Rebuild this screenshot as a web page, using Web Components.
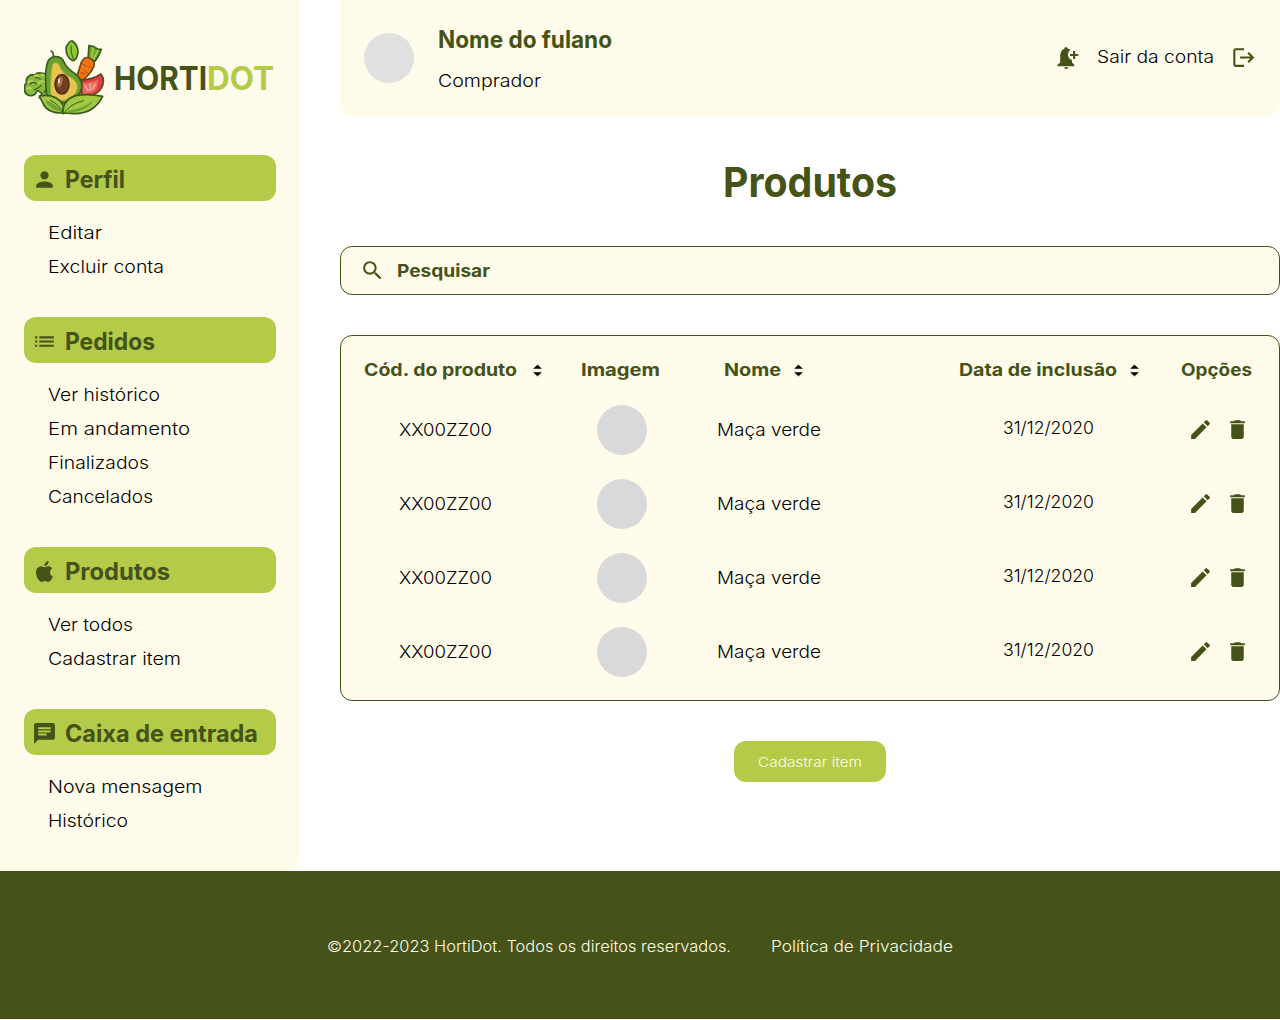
<!DOCTYPE html>
<html lang="pt-BR">
<head>
<meta charset="utf-8">
<title>HortiDot - Produtos</title>
<style>
:root{--cream:#fffbeb;--lime:#b4ca49;--moss:#455218}
body{margin:0;background:#fff;color:#000;font:350 17.4px/22px Inter,"Liberation Sans",sans-serif;overflow:hidden}
</style>
</head>
<body>
<horti-page></horti-page>
<script>
const define=(name,html,after)=>customElements.define(name,class extends HTMLElement{
  connectedCallback(){
    if(this.shadowRoot)return;
    this.attachShadow({mode:'open'}).innerHTML=typeof html==='function'?html(this):html;
    if(after)after(this);
  }
});

/* Text whose glyphs are widened to the given advance width */
define('horti-text',`<style>:host{display:block;white-space:pre;flex:none;text-align:left}span{display:inline-block;transform-origin:0 50%;vertical-align:top}</style><span><slot></slot></span>`,el=>{
  const w=+el.getAttribute('w'),s=el.shadowRoot.querySelector('span');
  const n=s.getBoundingClientRect().width;
  if(w&&n){s.style.transform=`scaleX(${w/n})`;el.style.width=w+'px';}
});

const ICONS={
  person:'<path d="M12 12c2.2 0 4-1.8 4-4s-1.800-4-4-4-4 1.800-4 4 1.800 4 4 4zm0 2c-2.700 0-8 1.300-8 4v2h16v-2c0-2.700-5.300-4-8-4z"/>',
  list:'<path d="M3 13h2v-2H3v2zm0 4h2v-2H3v2zm0-8h2V7H3v2zm4 4h14v-2H7v2zm0 4h14v-2H7v2zM7 7v2h14V7H7z"/>',
  apple:'<path d="M18.700 19.500c-.8 1.200-1.700 2.500-3 2.500s-1.800-.8-3.300-.8-2 .8-3.300.8c-1.300 0-2.300-1.300-3.100-2.500C4.200 17 3 12.500 4.700 9.400c.9-1.500 2.400-2.500 4-2.500 1.300 0 2.500.9 3.300.9s2.300-1.100 3.800-.9c.6 0 2.500.3 3.600 2-.1.100-2.100 1.300-2.100 3.800 0 3 2.600 4 2.700 4-.1.100-.4 1.400-1.300 2.800M13 3.500C13.700 2.700 14.900 2 15.900 2c.1 1.200-.3 2.400-1 3.200-.7.900-1.800 1.500-2.900 1.400-.2-1.100.4-2.300 1-3.100z"/>',
  message:'<path d="M20 2H4c-1.100 0-2 .9-2 2v18l4-4h14c1.100 0 2-.9 2-2V4c0-1.100-.9-2-2-2zM6 9h12v2H6V9zm8 5H6v-2h8v2zm4-6H6V6h12v2z"/>',
  search:'<path d="M15.5 14h-.79l-.28-.27A6.471 6.471 0 0 0 16 9.5 6.500 6.500 0 1 0 9.500 16c1.610 0 3.090-.59 4.230-1.570l.27.28v.79l5 4.990L20.490 19l-4.990-5zm-6 0C7.010 14 5 11.990 5 9.500S7.010 5 9.500 5 14 7.010 14 9.500 11.990 14 9.500 14z"/>',
  edit:'<path d="M3 17.250V21h3.750L17.810 9.940l-3.750-3.750L3 17.250zM20.710 7.040a1 1 0 0 0 0-1.410l-2.340-2.340a1 1 0 0 0-1.410 0l-1.830 1.830 3.750 3.750 1.830-1.830z"/>',
  trash:'<path d="M6 19c0 1.100.9 2 2 2h8c1.100 0 2-.9 2-2V7H6v12zM19 4h-3.500l-1-1h-5l-1 1H5v2h14V4z"/>',
  bell:'<path transform="translate(0 1)" d="M8.700 20.300h4.200a2.100 1.700 0 0 1-4.200 0zM10.500 1c.9 0 1.500.7 1.500 1.400 1.100.3 2 .7 2.700 1.400A5.500 5.500 0 0 0 16.300 13.500v2.300l2.200 2.200v1.500h-16V18L5 15.800v-6C5 6.300 6.600 3.300 9 2.500 9 1.700 9.600 1 10.500 1zM17.300 4.800h2.100v2.800H22.300v2h-2.900v2.900h-2.100v-2.900h-2.900v-2h2.900z"/>',
  exit:'<path fill="none" stroke="currentColor" stroke-width="2" d="M12.500 4H4.500Q3.200 4 3.200 5.300v13.400Q3.200 20 4.500 20h8M8.700 12h12.200M16.500 7.500 21 12l-4.500 4.500"/>',
  sort:'<path fill="#000" d="M12 6.700 15.700 10.100H8.300zM12 17.300 15.700 13.900H8.300z" stroke="#000" stroke-width=".5" stroke-linejoin="round"/>'
};
define('horti-icon',el=>`<style>:host{display:block;width:25px;height:25px;flex:none;color:var(--moss)}svg{display:block;width:100%;height:100%;fill:currentColor}</style><svg viewBox="0 0 24 24">${ICONS[el.getAttribute('name')]}</svg>`);

define('horti-logo',`<style>
:host{display:flex;align-items:center;height:75.400px;font-size:32px;font-weight:650;line-height:40px;color:var(--moss)}
svg{width:82px;height:76px;flex:none;margin-right:8px}.dot{color:var(--lime)}
horti-text{padding-top:2px}
</style>
<svg viewBox="12 12 246 228" stroke="#385a1b" stroke-width="5" stroke-linejoin="round" stroke-linecap="round">
<path d="M84 188 58 186 66 172 52 163 45 175Q31 183 22 176 12 170 14 158 11 147 20 141 16 128 27 120 36 114 44 117 54 107 66 112 77 110 86 124Z" fill="#8aba3c"/>
<path d="M24 139Q30 132 38 137M44 119Q50 116 56 123M22 157Q29 154 34 158M64 116Q70 115 76 122M56 142Q63 132 76 138" fill="none" stroke="#b3d354" stroke-width="6"/>
<path d="M30 145Q38 134 50 144M46 126Q56 122 61 130M42 161 54 156 64 148M72 170 80 158" fill="none" stroke-width="3.500"/>
<path d="M139 32Q151 12 157 15Q181 34 171 61Q167 74 158 74Q135 61 139 32Z" fill="#91c83b"/>
<path d="M153 30Q150 47 160 69" fill="none" stroke-width="3"/>
<path d="M204 69 207 29 221 32 233 39 244 40 237 57 225 76Z" fill="#6da52e"/>
<path d="M219 36 215 66M234 44 221 68" fill="none" stroke="#a0cd44" stroke-width="5"/>
<path d="M171 121 184 79Q193 60 209 66Q228 75 221 93Q211 116 186 133Z" fill="#ef7510" stroke="#6b4a18"/>
<path d="M188 84 201 91M216 94 207 91M183 110 193 114M202 111 195 106" fill="none" stroke="#b44d0d" stroke-width="3"/>
<path d="M174 134Q221 130 243 114Q257 131 244 157Q230 180 188 184Z" fill="#e2403f" stroke="#5f4a22"/>
<path d="M187 142Q216 141 234 130 236 157 219 169L190 174Z" fill="#ee6a63" stroke="none"/>
<path d="M196 150 204 164M210 144 212 163M225 145 218 158" stroke="#f7b9a4" stroke-width="4"/>
<path d="M101 62 99 51 94 45" fill="none" stroke-width="5"/>
<path d="M80 176Q73 122 80 88Q84 65 104 62Q125 61 132 78Q139 96 165 113Q195 136 182 167Q168 200 130 201Q92 202 80 176Z" fill="#69a02f"/>
<path d="M92 174Q90 127 96 92Q99 78 109 80Q118 81 121 95Q130 113 151 123Q184 143 168 170Q149 196 122 194Q101 193 92 174Z" fill="#e7c34f" stroke="#93aa36" stroke-width="3"/>
<ellipse cx="126" cy="145" rx="21" ry="29" fill="#72401e" stroke="#4f301b"/>
<ellipse cx="120" cy="137" rx="7" ry="16" transform="rotate(12 120 137)" fill="#a57352" stroke="none"/><ellipse cx="117" cy="135" rx="3" ry="8" fill="#efd5bc" stroke="none"/>
<path d="M130 231Q82 233 68 200L58 180Q110 171 130 209Z" fill="#a2c944"/>
<path d="M129 231Q127 192 167 179Q205 172 248 181Q223 232 164 233Z" fill="#a2c944"/>
<path d="M75 192Q108 202 125 227Q86 222 75 192Z" fill="#71a338" stroke="none"/>
<path d="M143 223Q182 220 220 194Q200 227 146 229Z" fill="#71a338" stroke="none"/>
<path d="M92 194Q116 202 130 235Q146 205 190 194" fill="none" stroke-width="3"/>
</svg><horti-text w="93">HORTI</horti-text><horti-text class="dot" w="67">DOT</horti-text>`);

define('horti-menu',el=>`<style>
:host{display:block}
header{display:flex;align-items:center;gap:8px;height:46px;padding:0 8px;border-radius:12px;background:var(--lime);color:var(--moss);font-size:24px;font-weight:650;line-height:30px}
header horti-icon{position:relative;top:1px}
header horti-text{padding-top:2.500px}
nav{display:flex;flex-direction:column;gap:12px;padding:20.600px 0 0 24px;margin-bottom:-.6px}
</style><header><horti-icon name="${el.getAttribute('icon')}"></horti-icon><horti-text w="${el.getAttribute('w')}">${el.getAttribute('heading')}</horti-text></header><nav><slot></slot></nav>`);

define('horti-sidebar',`<style>
:host{display:flex;flex-direction:column;gap:40px;box-sizing:border-box;width:300px;padding:40px 24px;background:var(--cream);border-radius:0 0 12px 0;flex:none}
</style>
<horti-logo></horti-logo>
<horti-menu icon="person" heading="Perfil" w="60"><horti-text w="54">Editar</horti-text><horti-text w="116">Excluir conta</horti-text></horti-menu>
<horti-menu icon="list" heading="Pedidos" w="90"><horti-text w="112">Ver histórico</horti-text><horti-text w="142">Em andamento</horti-text><horti-text w="101">Finalizados</horti-text><horti-text w="105">Cancelados</horti-text></horti-menu>
<horti-menu icon="apple" heading="Produtos" w="105"><horti-text w="85">Ver todos</horti-text><horti-text w="133">Cadastrar item</horti-text></horti-menu>
<horti-menu icon="message" heading="Caixa de entrada" w="193"><horti-text w="154.500">Nova mensagem</horti-text><horti-text w="80">Histórico</horti-text></horti-menu>`);

define('horti-avatar',`<style>:host{display:block;width:50px;height:50px;border-radius:50%;background:var(--tone,#d9d9d9);flex:none}</style>`);

define('horti-userbar',`<style>
:host{display:flex;align-items:center;box-sizing:border-box;height:115.500px;padding:24px;background:var(--cream);border-radius:0 0 12px 12px;--tone:#e1e1e1}
.who{display:flex;flex-direction:column;gap:15px;margin-left:24px}
.name{padding-top:1px;font-size:24px;font-weight:700;line-height:29.500px;color:var(--moss)}
.tools{display:flex;align-items:center;gap:17px;margin-left:auto}
.tools horti-text{padding-bottom:1.500px}
</style><horti-avatar></horti-avatar>
<div class="who"><horti-text class="name" w="174">Nome do fulano</horti-text><horti-text w="103">Comprador</horti-text></div>
<div class="tools"><horti-icon name="bell"></horti-icon><horti-text w="117">Sair da conta</horti-text><horti-icon name="exit"></horti-icon></div>`);

define('horti-search',`<style>
:host{display:flex;align-items:center;gap:12px;box-sizing:border-box;height:49px;padding:0 19px;border:1px solid var(--moss);border-radius:12px;background:var(--cream);color:var(--moss);font-weight:700}
horti-text{padding-top:2px}
</style><horti-icon name="search"></horti-icon><horti-text w="93">Pesquisar</horti-text>`);

define('horti-row',`<style>
:host{display:grid;grid-template-columns:217px 136px 242px 222px 1fr;align-items:center;height:50px}
.code{padding-left:35px}.pic{padding-left:16px}.date{padding:0 0 4px 44px}
.ops{display:flex;gap:12px;padding:0 0 0 7px}
</style>
<div class="code"><horti-text w="93">XX00ZZ00</horti-text></div><div class="pic"><horti-avatar></horti-avatar></div>
<div><horti-text w="104">Maça verde</horti-text></div><div class="date"><horti-text w="91">31/12/2020</horti-text></div>
<div class="ops"><horti-icon name="edit"></horti-icon><horti-icon name="trash"></horti-icon></div>`);

define('horti-table',`<style>
:host{display:flex;flex-direction:column;gap:25px;box-sizing:border-box;height:366px;padding:22px 23px 23px;border:1px solid var(--moss);border-radius:12px;background:var(--cream)}
.head{display:grid;grid-template-columns:217px 136px 242px 222px 1fr;height:22px;color:var(--moss);font-weight:700}
horti-row+horti-row{margin-top:-1px}
.head>div{display:flex;align-items:center}.head horti-icon{margin-left:8px}.head .near{margin-left:5px}.nm{padding-left:7px}
</style>
<div class="head"><div><horti-text w="153">Cód. do produto</horti-text><horti-icon name="sort"></horti-icon></div><div><horti-text w="79">Imagem</horti-text></div><div class="nm"><horti-text w="57">Nome</horti-text><horti-icon class="near" name="sort"></horti-icon></div><div><horti-text w="158">Data de inclusão</horti-text><horti-icon class="near" name="sort"></horti-icon></div><div><horti-text w="71">Opções</horti-text></div></div>
<horti-row></horti-row><horti-row></horti-row><horti-row></horti-row><horti-row></horti-row>`);

define('horti-button',`<style>:host{display:block;align-self:center}button{display:block;height:41px;padding:2px 24px 0;border:0;border-radius:12px;background:var(--lime);color:var(--cream);font:350 13.100px/17px Inter,sans-serif}</style><button><slot></slot></button>`);

define('horti-footer',`<style>
:host{display:flex;align-items:center;justify-content:center;gap:40px;box-sizing:border-box;height:148px;padding-top:3px;background:var(--moss);color:var(--cream);font-size:15.500px;line-height:20px}
</style><horti-text w="404">©2022-2023 HortiDot. Todos os direitos reservados.</horti-text><horti-text w="182">Política de Privacidade</horti-text>`);

define('horti-page',`<style>
:host{display:block}
.top{display:flex;gap:40px;height:871.300px}
main{display:flex;flex-direction:column;gap:40px;flex:1}
h1{margin:0;align-self:center;box-sizing:border-box;height:50px;padding-top:1px;font-size:41px;font-weight:650;line-height:50px;color:var(--moss)}
horti-sidebar{height:870.500px}
horti-button horti-text{font-size:13.100px;line-height:17px}
</style>
<div class="top"><horti-sidebar></horti-sidebar><main><horti-userbar></horti-userbar><h1><horti-text w="174">Produtos</horti-text></h1><horti-search></horti-search><horti-table></horti-table><horti-button><horti-text w="104">Cadastrar item</horti-text></horti-button></main></div>
<horti-footer></horti-footer>`);
</script>
</body>
</html>
